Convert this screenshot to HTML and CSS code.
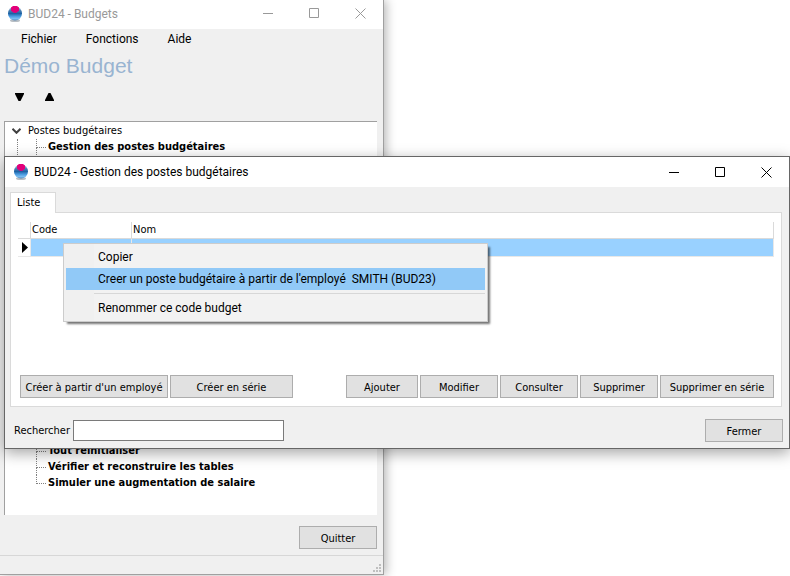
FILE: index.html
```html
<!DOCTYPE html>
<html lang="fr">
<head>
  <meta charset="UTF-8" />
  <meta name="viewport" content="width=device-width, initial-scale=1.0" />
  <title>BUD24 - Budgets</title>
  <link rel="stylesheet" href="styles.css">
</head>
<body>
  <svg class="defs" aria-hidden="true">
    <defs>
      <linearGradient id="ball" x1="0" y1="0" x2="0" y2="1">
        <stop offset="0" stop-color="#a9c4de" />
        <stop offset="0.3" stop-color="#4a7fb0" />
        <stop offset="0.5" stop-color="#1d62a4" />
        <stop offset="0.7" stop-color="#4a9be0" />
        <stop offset="0.88" stop-color="#7fc0f2" />
        <stop offset="1" stop-color="#4a80b0" />
      </linearGradient>
      <symbol id="logo" viewBox="0 0 16 18">
        <ellipse cx="8" cy="15.500" rx="5" ry="1.500" fill="#b8bec4" />
        <circle cx="8" cy="8.500" r="7" fill="url(#ball)" />
        <path d="M4 2.500L6 1h4l2 1.500v3L10 7.500L8 8L6 7.500L4 5.500z" fill="#e2007a" />
      </symbol>
      <symbol id="minimize" viewBox="0 0 11 11"><path d="M0 5.500h10" /></symbol>
      <symbol id="maximize" viewBox="0 0 11 11"><path d="M.5 .5h9v9h-9z" /></symbol>
      <symbol id="close" viewBox="0 0 11 11"><path d="M.5 .5l10 10M10.500 .5l-10 10" /></symbol>
    </defs>
  </svg>

  <main class="desktop">
    <section class="window main-window">
      <header class="title-bar">
        <svg class="logo"><use href="#logo" /></svg>
        <h1>BUD24 - Budgets</h1>
        <button class="win-btn" aria-label="Réduire"><svg><use href="#minimize" /></svg></button>
        <button class="win-btn" aria-label="Agrandir"><svg><use href="#maximize" /></svg></button>
        <button class="win-btn" aria-label="Fermer"><svg><use href="#close" /></svg></button>
      </header>

      <nav class="menu-bar">
        <a href="#">Fichier</a>
        <a href="#">Fonctions</a>
        <a href="#">Aide</a>
      </nav>

      <h2 class="company">Démo Budget</h2>

      <div class="arrows">
        <button aria-label="Descendre"><svg viewBox="0 0 9 8"><path d="M0 0h9v1L5.500 8h-2L0 1z" /></svg></button>
        <button aria-label="Monter"><svg viewBox="0 0 9 8"><path d="M0 8h9V7L5.500 0h-2L0 7z" /></svg></button>
      </div>

      <div class="tree">
        <div class="tree-root">
          <svg viewBox="0 0 9 6"><path d="M.5 .8l4 4l4-4" /></svg>
          <span>Postes budgétaires</span>
        </div>
        <ul class="tree-open">
          <li>Gestion des postes budgétaires</li>
        </ul>
        <ul class="tree-end">
          <li>Tout réinitialiser</li>
          <li>Vérifier et reconstruire les tables</li>
          <li>Simuler une augmentation de salaire</li>
        </ul>
      </div>

      <div class="main-actions">
        <button class="btn">Quitter</button>
      </div>
      <footer class="status-bar">
        <svg viewBox="0 0 8 8"><path d="M6 0h2v2H6zM3 3h2v2H3zM6 3h2v2H6zM0 6h2v2H0zM3 6h2v2H3zM6 6h2v2H6z" /></svg>
      </footer>
    </section>

    <section class="window dialog">
      <header class="title-bar">
        <svg class="logo"><use href="#logo" /></svg>
        <h1>BUD24 - Gestion des postes budgétaires</h1>
        <button class="win-btn" aria-label="Réduire"><svg><use href="#minimize" /></svg></button>
        <button class="win-btn" aria-label="Agrandir"><svg><use href="#maximize" /></svg></button>
        <button class="win-btn" aria-label="Fermer"><svg><use href="#close" /></svg></button>
      </header>

      <div class="dialog-body">
        <button class="tab">Liste</button>
        <div class="panel">
          <table class="grid">
            <thead>
              <tr>
                <th class="col-mark"></th>
                <th class="col-code">Code</th>
                <th>Nom</th>
              </tr>
            </thead>
            <tbody>
              <tr>
                <td class="col-mark"><svg viewBox="0 0 6 11"><path d="M0 0l6 5.500L0 11z" /></svg></td>
                <td></td>
                <td></td>
              </tr>
            </tbody>
          </table>

          <div class="actions">
            <button class="btn btn-create">Créer à partir d'un employé</button>
            <button class="btn btn-series">Créer en série</button>
            <span class="spacer"></span>
            <button class="btn btn-add">Ajouter</button>
            <button class="btn">Modifier</button>
            <button class="btn">Consulter</button>
            <button class="btn">Supprimer</button>
            <button class="btn btn-delete">Supprimer en série</button>
          </div>
        </div>

        <div class="search">
          <label for="search">Rechercher</label>
          <input type="text" id="search" />
          <span class="spacer"></span>
          <button class="btn">Fermer</button>
        </div>
      </div>

      <div class="context-menu" role="menu">
        <button role="menuitem">Copier</button>
        <button role="menuitem" class="selected">Creer un poste budgétaire à partir de l'employé&nbsp; SMITH (BUD23)</button>
        <hr />
        <button role="menuitem">Renommer ce code budget</button>
      </div>
    </section>
  </main>
</body>
</html>
```
FILE: styles.css
```css
:root {
  --face: #f0f0f0;
  --line: #dadada;
  --select: #99d1ff;
  --ui: Roboto, "Noto Sans", sans-serif;
  --small: "DejaVu Sans Condensed", "DejaVu Sans", sans-serif;
}
* {
  box-sizing: border-box;
}
body {
  margin: 0;
  background: white;
  color: black;
  font: 11px/16px var(--small);
}
button {
  font: inherit;
  color: inherit;
  padding: 0;
  border: none;
  background: none;
}
ul {
  list-style: none;
  margin: 0;
  padding: 0;
}
.defs {
  position: absolute;
  width: 0;
  height: 0;
}
.desktop {
  position: relative;
  height: 100vh;
  overflow: hidden;
}
.window {
  position: absolute;
  display: flex;
  flex-direction: column;
  background: var(--face);
}

/* Title bars */
.title-bar {
  display: flex;
  align-items: center;
  height: 30px;
  padding-left: 8px;
  background: white;
}
.title-bar h1 {
  flex: 1;
  margin: 0 0 0 5px;
  font: 12px/16px var(--ui);
  white-space: nowrap;
}
.logo {
  width: 16px;
  height: 18px;
}
.win-btn {
  display: grid;
  place-items: center;
  width: 46px;
  height: 100%;
}
.win-btn svg {
  width: 11px;
  height: 11px;
  fill: none;
  stroke: currentColor;
}

/* Main window */
.main-window {
  top: 0;
  left: 0;
  width: 384px;
  height: calc(100vh - 1px);
  border: solid #a0a0a0;
  border-width: 0 1px 1px 0;
  box-shadow: 2px 0 10px rgba(0, 0, 0, 0.3);
}
.main-window .title-bar {
  height: 29px;
  padding: 0 0 2px 7px;
  color: #999;
}
.menu-bar {
  display: flex;
  gap: 29px;
  padding: 2px 21px;
  font: 12px/16px var(--ui);
}
.menu-bar a {
  color: black;
  text-decoration: none;
}
.company {
  margin: 5px 4px 0;
  color: #99b4d1;
  font: 21px/24px "Liberation Sans", Arial, sans-serif;
}
.arrows {
  display: flex;
  gap: 21px;
  padding: 15px;
}
.arrows svg {
  display: block;
  width: 9px;
  height: 8px;
}
.tree {
  flex: 1;
  margin: 5px 6px 0 4px;
  padding-top: 1px;
  border: solid #a0a0a0;
  border-width: 1px 0 0 1px;
  background: white;
}
.tree-root {
  display: flex;
  align-items: center;
  gap: 7px;
  padding-left: 7px;
}
.tree-root svg {
  width: 9px;
  height: 6px;
  fill: none;
  stroke: #404040;
  stroke-width: 2;
}
.tree-open {
  height: 304px;
  margin-left: 12px;
  padding-left: 18px;
  border-left: 1px dotted #808080;
}
.tree-end {
  margin-left: 31px;
}
.tree li {
  position: relative;
  padding-left: 12px;
  font-weight: bold;
}
.tree li::before {
  content: "";
  position: absolute;
  top: 0;
  left: 0;
  width: 9px;
  height: 8px;
  border: dotted #808080;
  border-width: 0 0 1px 1px;
}
.tree li:not(.tree-end li:last-child)::after {
  content: "";
  position: absolute;
  top: 8px;
  left: 0;
  height: 8px;
  border-left: 1px dotted #808080;
}
.main-actions {
  display: flex;
  justify-content: flex-end;
  padding: 11px 6px 6px;
}
.status-bar {
  display: flex;
  justify-content: flex-end;
  align-items: flex-end;
  height: 19px;
  padding: 2px;
  border-top: 1px solid #d7d7d7;
}
.status-bar svg {
  width: 8px;
  height: 8px;
  fill: #bfbfbf;
}

/* Buttons */
.btn {
  width: 78px;
  height: 23px;
  padding-top: 2px;
  border: 1px solid #adadad;
  background: #e1e1e1;
  white-space: nowrap;
}
.btn-create { width: 148px; }
.btn-series { width: 123px; }
.btn-add { width: 72px; }
.btn-delete { width: 114px; }
.spacer {
  flex: 1;
}

/* Dialog */
.dialog {
  top: 156px;
  left: 4px;
  right: 0;
  border: 1px solid #666;
  box-shadow: 0 4px 14px rgba(0, 0, 0, 0.36);
}
.dialog-body {
  padding: 5px 6px 6px 5px;
}
.tab {
  position: relative;
  display: block;
  width: 46px;
  height: 21px;
  margin-bottom: -1px;
  padding: 0 0 1px 6px;
  border: 1px solid var(--line);
  border-bottom: none;
  background: white;
  text-align: left;
}
.panel {
  display: flex;
  flex-direction: column;
  justify-content: space-between;
  margin-right: 1px;
  min-height: 195px;
  padding: 9px 7px 8px;
  border: 1px solid var(--line);
  background: white;
}
.grid {
  width: 100%;
  border-collapse: separate;
  border-spacing: 0;
  table-layout: fixed;
}
.grid th,
.grid td {
  height: 17px;
  padding: 0 1px;
  border-right: 1px solid var(--line);
  border-bottom: 1px solid var(--line);
  font-weight: normal;
  text-align: left;
}
.grid td {
  height: 18px;
  border-color: #e8e8e8;
  background: var(--select);
}
.grid .col-mark {
  width: 13px;
  background: white;
}
.grid .col-code {
  width: 101px;
}
.grid td svg {
  display: block;
  width: 6px;
  height: 11px;
  margin-left: 3px;
}
.actions {
  display: flex;
  gap: 2px;
  padding-left: 2px;
}
.search {
  display: flex;
  align-items: center;
  gap: 3px;
  padding: 12px 0 0 4px;
}
.search input {
  width: 211px;
  height: 21px;
  padding: 0 4px;
  border: 1px solid #7a7a7a;
  background: white;
  font: inherit;
}

/* Context menu, lies over the grid */
.context-menu {
  position: absolute;
  top: 86px;
  left: 58px;
  width: 425px;
  padding: 2px;
  border: 1px solid #ccc;
  background: linear-gradient(90deg, #f0f0f0 30px, #f2f2f2 30px);
  box-shadow: 3px 3px 2px -1px rgba(0, 0, 0, 0.55);
  font: 12px/22px var(--ui);
}
.context-menu button {
  display: block;
  width: 100%;
  height: 22px;
  padding-left: 32px;
  text-align: left;
  white-space: nowrap;
}
.context-menu .selected {
  background: #91c9f7;
}
.context-menu hr {
  margin: 3px 0 3px 28px;
  border: none;
  border-top: 1px solid #d7d7d7;
}
```
